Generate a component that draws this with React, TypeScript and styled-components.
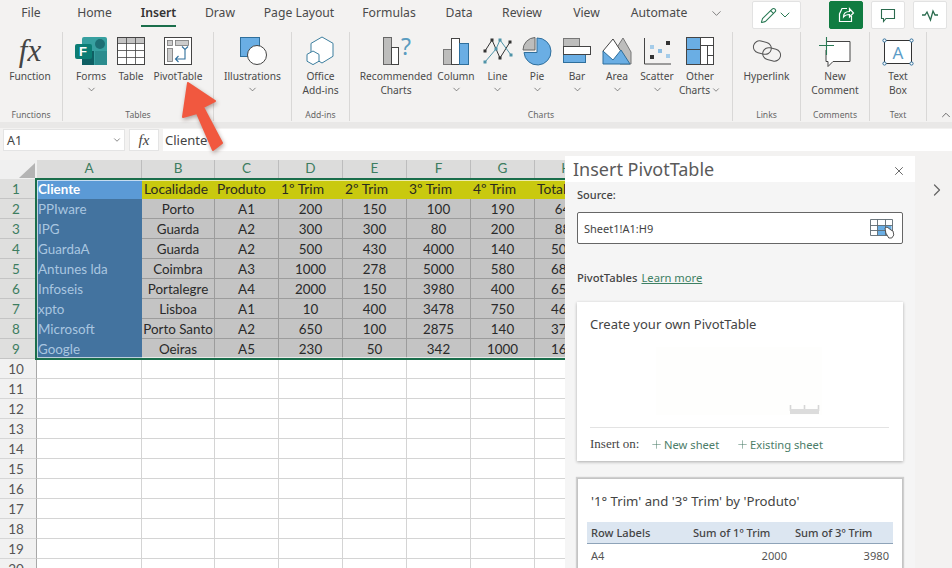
import { ReactNode } from 'react';
import styled, { createGlobalStyle } from 'styled-components';
import { ChevronDown, ChevronRight, ChevronUp, Pencil, Plus, X } from 'lucide-react';

const UI_FONT = '"Noto Sans", "Open Sans", sans-serif';
const GREEN = '#1a6e4b';

const GlobalStyle = createGlobalStyle`
  html, body {
    margin: 0;
    padding: 0;
    background: #f3f2f1;
  }
  * {
    box-sizing: border-box;
  }
`;

const Page = styled.div`
  position: relative;
  width: 952px;
  height: 568px;
  overflow: hidden;
  display: flex;
  flex-direction: column;
  background: #f3f2f1;
  font-family: ${UI_FONT};
  color: #444;
`;

/* top tabs */
const TabBar = styled.div`
  height: 28px;
  flex: none;
  display: flex;
  align-items: flex-start;
`;

const Tab = styled.div<{ $w: number }>`
  width: ${(p) => p.$w}px;
  height: 28px;
  flex: none;
  display: flex;
  justify-content: center;
`;

const TabLabel = styled.span<{ $active?: boolean }>`
  height: 27px;
  padding-top: 4px;
  font-size: 12.2px;
  line-height: 18px;
  font-weight: ${(p) => (p.$active ? 600 : 400)};
  color: ${(p) => (p.$active ? '#333' : '#4a4a4a')};
  border-bottom: 2px solid ${(p) => (p.$active ? GREEN : 'transparent')};
`;

const TabChevron = styled.div`
  width: 30px;
  height: 26px;
  display: flex;
  align-items: center;
  justify-content: center;
  color: #666;
`;

const TabActions = styled.div`
  margin-left: 21px;
  padding-top: 1px;
  display: flex;
`;

const ActionButton = styled.div<{ $w: number; $gap?: number; $primary?: boolean }>`
  width: ${(p) => p.$w}px;
  height: 28px;
  margin-right: ${(p) => p.$gap ?? 8}px;
  display: flex;
  align-items: center;
  justify-content: center;
  border-radius: 2px;
  background: ${(p) => (p.$primary ? '#107c41' : '#fff')};
  border: 1px solid ${(p) => (p.$primary ? '#107c41' : '#e2e2e2')};
  color: ${(p) => (p.$primary ? '#fff' : '#2a7a55')};
`;

/* ribbon */
const Ribbon = styled.div`
  height: 100px;
  flex: none;
  display: flex;
  border-bottom: 6px solid #e9e8e7;
`;

const Group = styled.div<{ $w: number }>`
  width: ${(p) => p.$w}px;
  flex: none;
  margin: 4px 0 1px;
  display: flex;
  flex-direction: column;
  border-right: 1px solid #d9d8d7;
`;

const GroupItems = styled.div<{ $pad?: number }>`
  flex: 1;
  padding-left: ${(p) => p.$pad ?? 0}px;
  display: flex;
`;

const GroupName = styled.div`
  height: 12px;
  text-align: center;
  font-size: 8.6px;
  line-height: 12px;
  color: #666;
`;

const Item = styled.div<{ $w?: number }>`
  width: ${(p) => (p.$w ? `${p.$w}px` : '100%')};
  flex: none;
  display: flex;
  flex-direction: column;
  align-items: center;
  font-size: 10.2px;
  line-height: 14px;
  text-align: center;
  color: #4a4a4a;
  white-space: nowrap;
`;

const ItemIcon = styled.svg`
  display: block;
  margin-top: 3px;
  margin-bottom: 2px;
  overflow: visible;
`;

const FxMark = styled.div`
  height: 32px;
  margin-top: 3px;
  margin-bottom: 2px;
  font-family: 'Liberation Serif', serif;
  font-style: italic;
  font-size: 31px;
  line-height: 32px;
  color: #444;
`;

const SmallChevron = styled(ChevronDown)`
  display: block;
  margin-top: 1px;
  color: #555;
`;

const InlineChevron = styled(ChevronDown)`
  display: inline-block;
  vertical-align: -1px;
  margin-left: 1px;
`;

const CollapseButton = styled.div`
  flex: 1;
  display: flex;
  align-items: flex-end;
  justify-content: center;
  padding-left: 12px;
  color: #444;
`;

/* formula bar */
const FormulaBar = styled.div`
  height: 28px;
  flex: none;
  padding: 1px 0 5px 3px;
  display: flex;
  gap: 4px;
`;

const NameBox = styled.div`
  width: 122px;
  display: flex;
  align-items: center;
  justify-content: space-between;
  padding: 0 2px 0 3px;
  background: #fff;
  border: 1px solid #e4e4e4;
  font-size: 12.5px;
  color: #444;
`;

const FxBox = styled.div`
  width: 30px;
  display: flex;
  align-items: center;
  justify-content: center;
  background: #fff;
  border: 1px solid #e4e4e4;
  font-family: 'Liberation Serif', serif;
  font-style: italic;
  font-size: 15px;
  color: #444;
`;

const FormulaInput = styled.div`
  flex: 1;
  padding-left: 2px;
  display: flex;
  align-items: center;
  background: #fff;
  font-size: 13px;
  color: #444;
`;

/* sheet */
const Main = styled.div`
  flex: 1;
  min-height: 0;
  display: flex;
`;

const SheetArea = styled.div`
  position: relative;
  width: 565px;
  flex: none;
  margin-top: 4px;
  overflow: hidden;
  background: #fff;
`;

const SheetGrid = styled.div`
  display: grid;
  grid-template-columns: 37px 105px 73px repeat(6, 64px);
  grid-template-rows: 19px;
  grid-auto-rows: 20px;
  font-family: Lato, 'Open Sans', sans-serif;
`;

const Corner = styled.div`
  background: #f0f0f0;
  display: flex;
  align-items: flex-end;
  justify-content: flex-end;
  padding: 0 2px 1px 0;
`;

const ColHead = styled.div`
  display: flex;
  align-items: center;
  justify-content: center;
  padding-bottom: 3px;
  background: #dcdcdb;
  border-right: 1px solid #bdbdbd;
  font-size: 13.5px;
  color: #3d7d60;
`;

const RowHead = styled.div<{ $on: boolean }>`
  display: flex;
  align-items: center;
  justify-content: center;
  padding-right: 4px;
  background: ${(p) => (p.$on ? '#dfdfde' : '#f1f1f1')};
  border-bottom: 1px solid ${(p) => (p.$on ? '#c4c4c4' : '#d6d6d6')};
  border-right: 1px solid #a8a8a8;
  font-size: 13.5px;
  color: ${(p) => (p.$on ? '#3d7d60' : '#555')};
`;

type CellKind = 'nameHead' | 'name' | 'head' | 'data' | 'empty';

const cellBg: Record<CellKind, string> = {
  nameHead: '#5b9ad6',
  name: '#43739f',
  head: '#c9c90f',
  data: '#c4c4c4',
  empty: '#fff',
};

const cellColor: Record<CellKind, string> = {
  nameHead: '#fff',
  name: '#a9c6e0',
  head: '#2b2b20',
  data: '#2a2a2a',
  empty: '#333',
};

const cellPad: Record<CellKind, number> = {
  nameHead: 1,
  name: 1,
  head: 2,
  data: 0,
  empty: 0,
};

const Cell = styled.div<{ $kind: CellKind }>`
  display: flex;
  align-items: center;
  justify-content: ${(p) => (cellPad[p.$kind] ? 'flex-start' : 'center')};
  padding-left: ${(p) => cellPad[p.$kind]}px;
  overflow: hidden;
  white-space: nowrap;
  background: ${(p) => cellBg[p.$kind]};
  color: ${(p) => cellColor[p.$kind]};
  font-size: ${(p) => (p.$kind === 'head' ? 13.8 : 13.4)}px;
  font-weight: ${(p) => (p.$kind === 'nameHead' ? 700 : 400)};
  border-right: 1px solid
    ${(p) => (p.$kind === 'empty' ? '#d4d4d4' : p.$kind === 'data' ? '#9c9c9c' : 'transparent')};
  border-bottom: 1px solid
    ${(p) => (p.$kind === 'empty' ? '#d4d4d4' : p.$kind === 'data' ? '#9c9c9c' : 'transparent')};
`;

const SelectionFrame = styled.div`
  position: absolute;
  left: 35px;
  top: 18px;
  width: 620px;
  height: 182px;
  border: 2px solid ${GREEN};
  box-shadow: inset 0 0 0 1px rgba(255, 255, 255, 0.65);
  pointer-events: none;
`;

/* task pane */
const Pane = styled.div`
  width: 350px;
  flex: none;
  display: flex;
  flex-direction: column;
  background: #f5f5f5;
  overflow: hidden;
`;

const PaneHeader = styled.div`
  height: 26px;
  flex: none;
  padding: 0 9px 0 8px;
  display: flex;
  align-items: center;
  justify-content: space-between;
  background: #fff;
  font-size: 18px;
  line-height: 26px;
  color: #5a5a5a;
`;

const CloseIcon = styled(X)`
  margin-top: 4px;
  color: #555;
`;

const PaneBody = styled.div`
  padding: 0 12px;
`;

const FieldLabel = styled.div`
  margin-top: 5px;
  font-size: 11px;
  line-height: 16px;
  font-weight: 500;
  color: #444;
`;

const SourceInput = styled.div`
  height: 32px;
  margin-top: 9px;
  padding: 0 7px 0 6px;
  display: flex;
  align-items: center;
  justify-content: space-between;
  background: #fff;
  border: 1px solid #666;
  border-radius: 2px;
  font-size: 11px;
  color: #444;
`;

const SectionRow = styled.div`
  margin-top: 25px;
  display: flex;
  gap: 4px;
  font-size: 11.2px;
  line-height: 18px;
`;

const SectionTitle = styled.span`
  font-weight: 500;
  color: #444;
`;

const LearnLink = styled.span`
  color: #3d8063;
  text-decoration: underline;
`;

const Card = styled.div`
  background: #fff;
  box-shadow: 0 1px 3px rgba(0, 0, 0, 0.3);
`;

const CreateCard = styled(Card)`
  height: 159px;
  margin-top: 15px;
  padding: 12px 14px 0 13px;
`;

const CardTitle = styled.div`
  font-size: 13px;
  line-height: 20px;
  color: #444;
`;

const CardPicture = styled.svg`
  display: block;
  margin-top: 9px;
`;

const InsertRow = styled.div`
  height: 33px;
  display: flex;
  align-items: center;
  border-top: 1px solid #e3e3e3;
  font-size: 11.2px;
`;

const InsertLabel = styled.span`
  width: 60px;
  font-family: 'Liberation Serif', serif;
  font-size: 13px;
  color: #444;
`;

const InsertLink = styled.span<{ $w: number }>`
  width: ${(p) => p.$w}px;
  display: flex;
  align-items: center;
  gap: 1px;
  color: #4b7d68;
`;

const PreviewCard = styled(Card)`
  margin-top: 17px;
  height: 130px;
  padding: 12px 9px 0 9px;
  border: 1px solid #c4c4c4;
  box-shadow: 0 0 1px 1px #cfcfcf;
`;

const PreviewTitle = styled.div`
  padding-left: 4px;
  font-size: 13.2px;
  line-height: 20px;
  color: #444;
`;

const PreviewHead = styled.div`
  height: 22px;
  margin-top: 11px;
  display: grid;
  grid-template-columns: 102px 102px 98px;
  align-items: center;
  padding-left: 4px;
  background: #dce6f1;
  border-bottom: 1px solid #8ea3b8;
  font-size: 11.1px;
  font-weight: 500;
  color: #444;
`;

const PreviewRow = styled.div`
  height: 22px;
  display: grid;
  grid-template-columns: 102px 94px 102px;
  align-items: center;
  padding-left: 4px;
  font-size: 11.1px;
  color: #555;
`;

const PreviewNumber = styled.span`
  text-align: right;
`;

const RightStrip = styled.div`
  flex: 1;
  padding: 24px 0 0 12px;
  color: #666;
`;

const CalloutArrow = styled.svg`
  position: absolute;
  left: 175px;
  top: 76px;
  filter: drop-shadow(1px 2px 2px rgba(90, 60, 50, 0.45));
  pointer-events: none;
`;

/* ribbon icons, drawn at the size they have in the picture */
const LINE = '#444';
const BLUE = '#6aaee4';
const BLUE_LINE = '#2f6f9c';
const GREY = '#bdbdbc';

const Icon = ({ w, h = 32, children }: { w: number; h?: number; children: ReactNode }) => (
  <ItemIcon width={w} height={h} viewBox={`0 0 ${w} ${h}`}>
    {children}
  </ItemIcon>
);

const FormsIcon = () => (
  <Icon w={34}>
    <rect x={8} y={2} width={25} height={28} rx={2} fill="#37a0a0" />
    <rect x={8} y={16} width={12} height={14} fill="#0e5f63" />
    <rect x={21} y={16} width={12} height={14} fill="#2b8c8e" />
    <circle cx={26} cy={9} r={5} fill="#1d6f74" />
    <rect x={1} y={9} width={17} height={15} rx={2} fill="#0b7d74" />
    <text x={5} y={21} fontFamily="Liberation Sans" fontWeight={700} fontSize={13} fill="#fff">
      F
    </text>
  </Icon>
);

const TableIcon = () => (
  <Icon w={30}>
    <rect x={1.5} y={2.5} width={27} height={27} fill="#fff" stroke={LINE} />
    <rect x={2} y={3} width={26} height={5} fill="#c4c4c4" />
    <path d="M2 8.5h26M2 15.5h26M2 22.5h26M10.5 3v26M19.5 3v26" stroke={LINE} strokeWidth={0.8} fill="none" />
  </Icon>
);

const PivotIcon = () => (
  <Icon w={30}>
    <rect x={1.5} y={2.5} width={27} height={27} fill="#fff" stroke={LINE} />
    <rect x={4.5} y={5.5} width={5} height={5} fill="#ccc" stroke="#777" strokeWidth={0.8} />
    <rect x={12.5} y={5.5} width={13} height={5} fill="#ccc" stroke="#777" strokeWidth={0.8} />
    <rect x={4.5} y={13.5} width={5} height={13} fill="#ccc" stroke="#777" strokeWidth={0.8} />
    <path d="M14 25h9V15M20 12.5l3 3 3-3M16.5 22l-3 3 3 3" transform="translate(-1 -1)" stroke={BLUE_LINE} strokeWidth={1.1} fill="none" />
  </Icon>
);

const IllustrationsIcon = () => (
  <Icon w={30}>
    <rect x={2.5} y={2.5} width={19} height={19} fill={BLUE} stroke={BLUE_LINE} />
    <circle cx={19} cy={20} r={9.5} fill="#fff" stroke={LINE} />
  </Icon>
);

const AddinsIcon = () => (
  <Icon w={30}>
    <path d="M16 2l11 6.3v13L16 28l-11-6.6v-13z" fill="#fff" stroke="#3d7f9f" />
    <path d="M7 16l6 3.4v6.8L7 29.6l-6-3.4v-6.8z" fill="#fff" stroke="#3d7f9f" />
  </Icon>
);

const RecommendedIcon = () => (
  <Icon w={36}>
    <rect x={5.5} y={2.5} width={8} height={27} fill={GREY} stroke="#666" />
    <rect x={13.5} y={12.5} width={7} height={17} fill="#fff" stroke={LINE} />
    <text x={23} y={20} fontFamily="Noto Sans" fontSize={23} fill="#5a9cc0">
      ?
    </text>
  </Icon>
);

const ColumnIcon = () => (
  <Icon w={30}>
    <rect x={2.5} y={14.5} width={8} height={15} fill={GREY} stroke="#777" />
    <rect x={10.5} y={3.5} width={8} height={26} fill="#fff" stroke={LINE} />
    <rect x={18.5} y={8.5} width={9} height={21} fill={BLUE} stroke={BLUE_LINE} />
  </Icon>
);

const LineIcon = () => (
  <Icon w={32}>
    <polyline points="3,16 10,5 18,23 28,7" fill="none" stroke="#333" strokeWidth={1} />
    <polyline points="3,27 14,14 18,5 29,20" fill="none" stroke="#4f93a8" strokeWidth={1} />
    {[[3, 16], [10, 5], [18, 23], [28, 7]].map(([x, y]) => (
      <rect key={`${x}-${y}`} x={x - 1.5} y={y - 1.5} width={3} height={3} fill="#333" />
    ))}
    {[[3, 27], [14, 14], [18, 5], [29, 20]].map(([x, y]) => (
      <rect key={`${x}-${y}`} x={x - 1.5} y={y - 1.5} width={3} height={3} fill="#4f93a8" />
    ))}
  </Icon>
);

const PieIcon = () => (
  <Icon w={30}>
    <path d="M15 3a13.5 13.5 0 1 1-13 14.5H15z" fill={BLUE} stroke={BLUE_LINE} />
    <path d="M13 2.5v12.5H1A12.5 12.5 0 0 1 13 2.5z" fill={GREY} stroke="#666" />
  </Icon>
);

const BarIcon = () => (
  <Icon w={30}>
    <rect x={1.5} y={3.5} width={16} height={8} fill={GREY} stroke="#777" />
    <rect x={1.5} y={19.5} width={22} height={8} fill={BLUE} stroke={BLUE_LINE} />
    <rect x={1.5} y={11.5} width={27} height={8} fill="#fff" stroke={LINE} />
  </Icon>
);

const AreaIcon = () => (
  <Icon w={30}>
    <path d="M14 14l7-11 8 14v12H18z" fill={GREY} stroke="#777" />
    <path d="M1 16L11 4l9 14-9 11z" fill="#fff" stroke={LINE} />
    <path d="M1 29V16l10 9 8-10 9 14z" fill={BLUE} stroke={BLUE_LINE} />
  </Icon>
);

const ScatterIcon = () => (
  <Icon w={30}>
    <path d="M2.5 3v26H29" fill="none" stroke={LINE} />
    <rect x={24} y={6} width={4} height={4} fill="#333" />
    <rect x={8} y={20} width={4} height={4} fill="#333" />
    <rect x={8} y={10} width={4} height={4} fill="#a5cce9" />
    <rect x={16} y={14} width={4} height={4} fill="#8cbce0" />
    <rect x={24} y={19} width={4} height={4} fill="#a5cce9" />
  </Icon>
);

const OtherIcon = () => (
  <Icon w={30}>
    <rect x={1.5} y={2.5} width={27} height={27} fill="#fff" stroke={LINE} />
    <rect x={2} y={3} width={14} height={26} fill={BLUE} />
    <path d="M2 14.5h14M15.5 3v26M16 10.5h13M22.5 10.5v19M22.5 20.5h6" stroke={LINE} fill="none" />
  </Icon>
);

const HyperlinkIcon = () => (
  <Icon w={30}>
    <rect x={1.5} y={6.5} width={18} height={12} rx={6} fill="none" stroke="#555" transform="rotate(14 10 12)" />
    <rect x={10.5} y={13.5} width={18} height={12} rx={6} fill="none" stroke="#555" transform="rotate(14 20 20)" />
  </Icon>
);

const CommentIcon = () => (
  <Icon w={32}>
    <path d="M7 6.5h24v20H14l-5 5v-5H7V15" fill="#fff" stroke={LINE} />
    <path d="M0 10.5h15M7.5 2v18" stroke="#2a7a55" strokeWidth={1.1} fill="none" />
  </Icon>
);

const TextBoxIcon = () => (
  <Icon w={32}>
    <rect x={2.5} y={5.5} width={27} height={23} fill="#fff" stroke="#333" />
    {[[2.5, 5.5], [29.5, 5.5], [2.5, 28.5], [29.5, 28.5]].map(([x, y]) => (
      <circle key={`${x}-${y}`} cx={x} cy={y} r={1.6} fill="#fff" stroke={BLUE_LINE} />
    ))}
    <text x={16} y={24} textAnchor="middle" fontFamily="Noto Sans" fontSize={17} fill="#5b9cc7">
      A
    </text>
  </Icon>
);

const ShareIcon = () => (
  <svg width={20} height={20} viewBox="0 0 20 20" fill="none" stroke="#fff" strokeWidth={1.2}>
    <path d="M11 3.5H6L3.5 9v7.5h12V11" />
    <path d="M7.5 12c0-3.5 2.5-5.5 6-5.5V3.5l4 4.5-4 4V9.5c-2.5 0-4.5.5-6 2.5z" fill="#107c41" />
  </svg>
);

const CommentButtonIcon = () => (
  <svg width={16} height={16} viewBox="0 0 16 16" fill="none" stroke="#2a6b4e" strokeWidth={1.1}>
    <path d="M1.5 2.5h13v9H6L3.5 14.5v-3h-2z" />
  </svg>
);

const CatchupIcon = () => (
  <svg width={18} height={14} viewBox="0 0 18 14" fill="none" stroke="#2a6b4e" strokeWidth={1.3}>
    <path d="M1 7h3l2-3 3.5 8L12 3l2 4h3" />
  </svg>
);

const RangeIcon = () => (
  <svg width={25} height={21} viewBox="0 0 25 21" fill="none">
    <rect x={7.5} y={7.5} width={14} height={10} fill={BLUE} />
    <path d="M.5 1.5h22v16H.5zM.5 7.5h22M.5 12.5h22M7.5 1.5v16M15.5 1.5v16" stroke="#5e6a72" strokeWidth={0.9} />
    <path d="M15 10l2-1 4 3 2 1 .8 4-2 3h-3l-3-5z" fill="#fff" stroke="#444" strokeWidth={0.9} />
  </svg>
);

const tabs: [string, number][] = [
  ['File', 62],
  ['Home', 65],
  ['Insert', 63],
  ['Draw', 60],
  ['Page Layout', 98],
  ['Formulas', 82],
  ['Data', 58],
  ['Review', 68],
  ['View', 61],
  ['Automate', 84],
];

const columns = ['A', 'B', 'C', 'D', 'E', 'F', 'G', 'H'];

const tableHead = ['Localidade', 'Produto', '1º Trim', '2º Trim', '3º Trim', '4º Trim', 'Total'];

const tableRows: (string | number)[][] = [
  ['PPIware', 'Porto', 'A1', 200, 150, 100, 190, 640],
  ['IPG', 'Guarda', 'A2', 300, 300, 80, 200, 880],
  ['GuardaA', 'Guarda', 'A2', 500, 430, 4000, 140, 5070],
  ['Antunes lda', 'Coimbra', 'A3', 1000, 278, 5000, 580, 6858],
  ['Infoseis', 'Portalegre', 'A4', 2000, 150, 3980, 400, 6530],
  ['xpto', 'Lisboa', 'A1', 10, 400, 3478, 750, 4638],
  ['Microsoft', 'Porto Santo', 'A2', 650, 100, 2875, 140, 3765],
  ['Google', 'Oeiras', 'A5', 230, 50, 342, 1000, 1622],
];

const emptyRows = [10, 11, 12, 13, 14, 15, 16, 17, 18, 19, 20];

const Sheet = () => (
  <SheetArea>
    <SheetGrid>
      <Corner>
        <svg width={16} height={15} viewBox="0 0 16 15">
          <path d="M16 0v15H0z" fill="#b4b4b4" />
        </svg>
      </Corner>
      {columns.map((c) => (
        <ColHead key={c}>{c}</ColHead>
      ))}

      <RowHead $on>1</RowHead>
      <Cell $kind="nameHead">Cliente</Cell>
      {tableHead.map((h) => (
        <Cell key={h} $kind="head">
          {h}
        </Cell>
      ))}

      {tableRows.map((row, i) => [
        <RowHead key={`r${i}`} $on>
          {i + 2}
        </RowHead>,
        ...row.map((value, j) => (
          <Cell key={`${i}-${j}`} $kind={j === 0 ? 'name' : 'data'}>
            {value}
          </Cell>
        )),
      ])}

      {emptyRows.map((n) => [
        <RowHead key={`r${n}`} $on={false}>
          {n}
        </RowHead>,
        ...columns.map((c) => <Cell key={`${n}${c}`} $kind="empty" />),
      ])}
    </SheetGrid>
    <SelectionFrame />
  </SheetArea>
);

const PivotPane = () => (
  <Pane>
    <PaneHeader>
      Insert PivotTable
      <CloseIcon size={14} strokeWidth={1.5} />
    </PaneHeader>
    <PaneBody>
      <FieldLabel>Source:</FieldLabel>
      <SourceInput>
        Sheet1!A1:H9
        <RangeIcon />
      </SourceInput>
      <SectionRow>
        <SectionTitle>PivotTables</SectionTitle>
        <LearnLink>Learn more</LearnLink>
      </SectionRow>
      <CreateCard>
        <CardTitle>Create your own PivotTable</CardTitle>
        <CardPicture width={299} height={84} viewBox="0 0 299 84">
          <rect x={66} y={4} width={166} height={68} fill="#fefefd" />
          <path d="M200.5 62v6M214.5 62v6M228.5 62v6" fill="none" stroke="#d6d6d6" strokeWidth={1.6} />
          <rect x={200} y={66} width={29} height={5} fill="#dcdcdc" />
        </CardPicture>
        <InsertRow>
          <InsertLabel>Insert on:</InsertLabel>
          <InsertLink $w={86}>
            <Plus size={13} strokeWidth={1} />
            New sheet
          </InsertLink>
          <InsertLink $w={100}>
            <Plus size={13} strokeWidth={1} />
            Existing sheet
          </InsertLink>
        </InsertRow>
      </CreateCard>
      <PreviewCard>
        <PreviewTitle>'1° Trim' and '3° Trim' by 'Produto'</PreviewTitle>
        <PreviewHead>
          <span>Row Labels</span>
          <span>Sum of 1º Trim</span>
          <span>Sum of 3º Trim</span>
        </PreviewHead>
        <PreviewRow>
          <span>A4</span>
          <PreviewNumber>2000</PreviewNumber>
          <PreviewNumber>3980</PreviewNumber>
        </PreviewRow>
      </PreviewCard>
    </PaneBody>
  </Pane>
);

const App = () => (
  <Page>
    <GlobalStyle />
    <TabBar>
      {tabs.map(([label, w]) => (
        <Tab key={label} $w={w}>
          <TabLabel $active={label === 'Insert'}>{label}</TabLabel>
        </Tab>
      ))}
      <TabChevron>
        <ChevronDown size={15} strokeWidth={1.3} />
      </TabChevron>
      <TabActions>
        <ActionButton $w={49} $gap={28}>
          <Pencil size={17} strokeWidth={1.5} />
          <ChevronDown size={16} strokeWidth={1.5} />
        </ActionButton>
        <ActionButton $w={34} $primary>
          <ShareIcon />
        </ActionButton>
        <ActionButton $w={34}>
          <CommentButtonIcon />
        </ActionButton>
        <ActionButton $w={34} $gap={0}>
          <CatchupIcon />
        </ActionButton>
      </TabActions>
    </TabBar>

    <Ribbon>
      <Group $w={63}>
        <GroupItems>
          <Item $w={60}>
            <FxMark>fx</FxMark>
            Function
          </Item>
        </GroupItems>
        <GroupName>Functions</GroupName>
      </Group>
      <Group $w={151}>
        <GroupItems $pad={8}>
          <Item $w={40}>
            <FormsIcon />
            Forms
            <SmallChevron size={11} strokeWidth={1.5} />
          </Item>
          <Item $w={40}>
            <TableIcon />
            Table
          </Item>
          <Item $w={54}>
            <PivotIcon />
            PivotTable
          </Item>
        </GroupItems>
        <GroupName>Tables</GroupName>
      </Group>
      <Group $w={78}>
        <GroupItems>
          <Item>
            <IllustrationsIcon />
            Illustrations
            <SmallChevron size={11} strokeWidth={1.5} />
          </Item>
        </GroupItems>
        <GroupName>&nbsp;</GroupName>
      </Group>
      <Group $w={58}>
        <GroupItems>
          <Item>
            <AddinsIcon />
            Office
            <br />
            Add-ins
          </Item>
        </GroupItems>
        <GroupName>Add-ins</GroupName>
      </Group>
      <Group $w={383}>
        <GroupItems $pad={10}>
          <Item $w={72}>
            <RecommendedIcon />
            Recommended
            <br />
            Charts
          </Item>
          <Item $w={48}>
            <ColumnIcon />
            Column
            <SmallChevron size={11} strokeWidth={1.5} />
          </Item>
          <Item $w={35}>
            <LineIcon />
            Line
            <SmallChevron size={11} strokeWidth={1.5} />
          </Item>
          <Item $w={44}>
            <PieIcon />
            Pie
            <SmallChevron size={11} strokeWidth={1.5} />
          </Item>
          <Item $w={36}>
            <BarIcon />
            Bar
            <SmallChevron size={11} strokeWidth={1.5} />
          </Item>
          <Item $w={44}>
            <AreaIcon />
            Area
            <SmallChevron size={11} strokeWidth={1.5} />
          </Item>
          <Item $w={36}>
            <ScatterIcon />
            Scatter
            <SmallChevron size={11} strokeWidth={1.5} />
          </Item>
          <Item $w={50}>
            <OtherIcon />
            Other
            <span>
              Charts
              <InlineChevron size={10} strokeWidth={1.5} />
            </span>
          </Item>
        </GroupItems>
        <GroupName>Charts</GroupName>
      </Group>
      <Group $w={68}>
        <GroupItems>
          <Item>
            <HyperlinkIcon />
            Hyperlink
          </Item>
        </GroupItems>
        <GroupName>Links</GroupName>
      </Group>
      <Group $w={69}>
        <GroupItems>
          <Item>
            <CommentIcon />
            New
            <br />
            Comment
          </Item>
        </GroupItems>
        <GroupName>Comments</GroupName>
      </Group>
      <Group $w={57}>
        <GroupItems>
          <Item>
            <TextBoxIcon />
            Text
            <br />
            Box
          </Item>
        </GroupItems>
        <GroupName>Text</GroupName>
      </Group>
      <CollapseButton>
        <ChevronUp size={14} strokeWidth={1.3} />
      </CollapseButton>
    </Ribbon>

    <FormulaBar>
      <NameBox>
        A1
        <ChevronDown size={10} strokeWidth={1.5} />
      </NameBox>
      <FxBox>fx</FxBox>
      <FormulaInput>Cliente</FormulaInput>
    </FormulaBar>

    <Main>
      <Sheet />
      <PivotPane />
      <RightStrip>
        <ChevronRight size={20} strokeWidth={1.5} />
      </RightStrip>
    </Main>

    <CalloutArrow width={60} height={84} viewBox="0 0 60 84">
      <path d="M13 7L40 25 28 31 47 67 38 74 22 37 8 41z" fill="#f1583f" stroke="#f1583f" strokeWidth={2} strokeLinejoin="round" />
    </CalloutArrow>
  </Page>
);

export default App;
